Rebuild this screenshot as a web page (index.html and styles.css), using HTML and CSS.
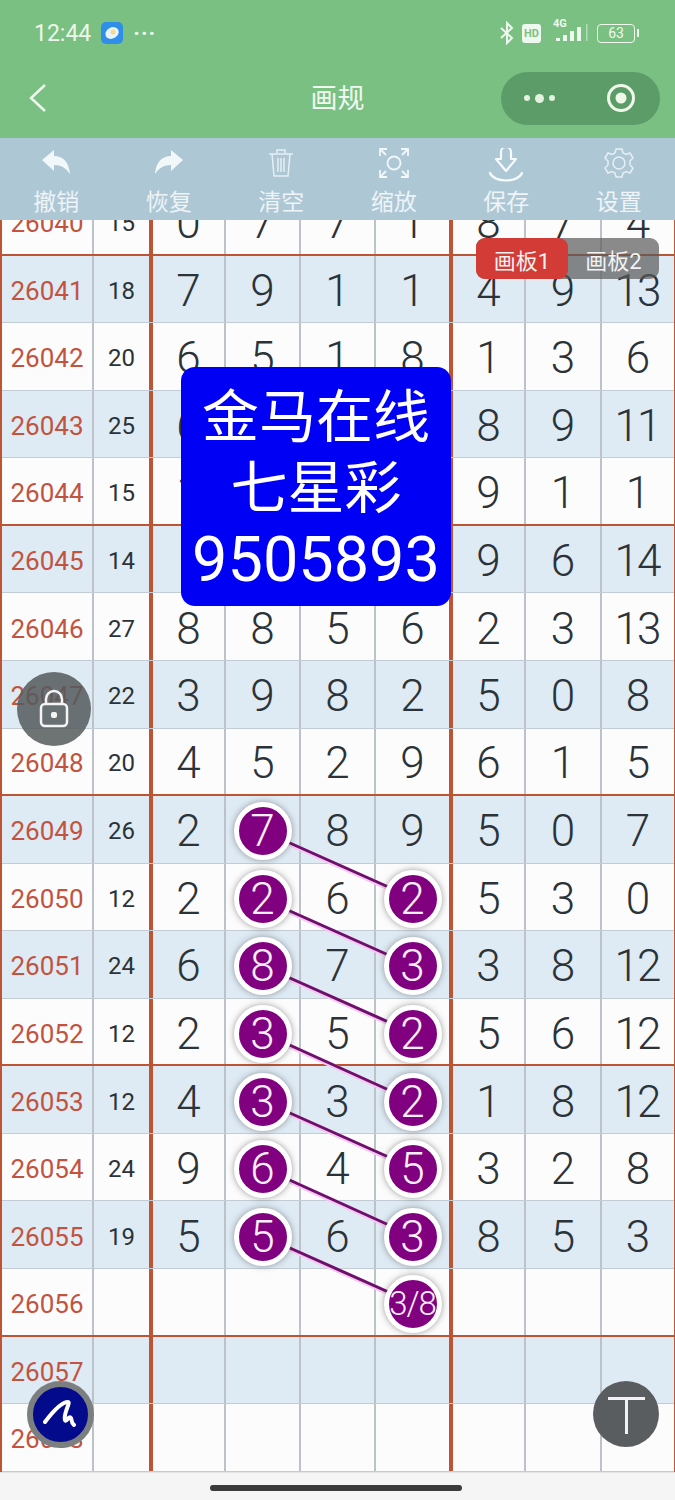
FILE: index.html
```html
<!DOCTYPE html>
<html lang="zh">
<head>
    <meta charset="UTF-8">
    <meta name="viewport" content="width=device-width, initial-scale=1.0">
    <title>画规</title>
    <link rel="stylesheet" href="styles.css">
</head>
<body>
    <header class="top">
        <div class="status">
            <span class="time">12:44</span>
            <svg class="app-icon" width="22" height="22" viewBox="0 0 22 22"><rect width="22" height="22" rx="5" fill="#2f8fe8"/><ellipse cx="11" cy="11" rx="7" ry="5.5" fill="#e8f4ff" transform="rotate(-30 11 11)"/><circle cx="12" cy="10" r="2.5" fill="#f4d98a"/></svg>
            <span class="status-dots">···</span>
            <span class="status-right">
                <svg width="18" height="24" viewBox="0 0 16 24" fill="none" stroke="#eef8ee" stroke-width="2"><path d="M2 7l11 10-5 5V2l5 5L2 17"/></svg>
                <span class="hd">HD</span>
                <span class="net"><b>4G</b><svg width="36" height="18" viewBox="0 0 36 18" fill="#eef8ee"><rect x="1" y="14" width="4" height="3"/><rect x="8" y="11" width="4" height="6"/><rect x="15" y="7" width="4" height="10"/><rect x="22" y="3" width="4" height="14"/><rect x="31" y="0" width="1.500" height="17" opacity=".5"/></svg></span>
                <span class="battery">63</span><span class="battery-tip"></span>
            </span>
        </div>
        <div class="nav">
            <svg class="back" width="20" height="30" viewBox="0 0 20 30" fill="none" stroke="#f0f8f0" stroke-width="2.500"><path d="M17 2L3 15l14 13"/></svg>
            <span class="nav-title">画规</span>
            <div class="capsule">
                <span class="capsule-dots"><i></i><i class="big"></i><i></i></span>
                <svg width="32" height="32" viewBox="0 0 32 32"><circle cx="16" cy="16" r="12.500" fill="none" stroke="#f0f8ea" stroke-width="3"/><circle cx="16" cy="16" r="5.500" fill="#f0f8ea"/></svg>
            </div>
        </div>
    </header>

    <div class="toolbar">
        <div class="tool">
            <svg width="30" height="28" viewBox="0 0 30 28" fill="#f2f7fa"><path d="M1 12L13 2v6c9 0 15 6 16 18-4-6-9-9-16-9v6z"/></svg>
            <span>撤销</span>
        </div>
        <div class="tool">
            <svg width="30" height="28" viewBox="0 0 30 28" fill="#f2f7fa"><path d="M29 12L17 2v6C8 8 2 14 1 26c4-6 9-9 16-9v6z"/></svg>
            <span>恢复</span>
        </div>
        <div class="tool">
            <svg width="26" height="30" viewBox="0 0 26 30" fill="none" stroke="#e6eff4" stroke-width="1.500"><path d="M1 6h24M9 5V2h8v3M4 6l2 22h14l2-22M10 10v14M13 10v14M16 10v14"/></svg>
            <span>清空</span>
        </div>
        <div class="tool">
            <svg width="30" height="30" viewBox="0 0 30 30" fill="none" stroke="#f2f7fa" stroke-width="1.800"><circle cx="15" cy="15" r="6.500"/><path d="M1 8V1h7M1 1l6 6M22 1h7v7M29 1l-6 6M1 22v7h7M1 29l6-6M29 22v7h-7M29 29l-6-6"/></svg>
            <span>缩放</span>
        </div>
        <div class="tool">
            <svg width="36" height="34" viewBox="0 0 36 34" fill="none" stroke="#f6fafc" stroke-width="2.200" stroke-linejoin="round" stroke-linecap="round"><path d="M13 11V4a5 5 0 0 1 10 0v7h5L18 23 8 11zM2 25c4 10 28 10 32 0"/></svg>
            <span>保存</span>
        </div>
        <div class="tool">
            <svg width="30" height="30" viewBox="0 0 30 30" fill="none" stroke="#e6eff4" stroke-width="1.500"><circle cx="15" cy="15" r="6"/><path d="M12 1h6l1 4 3 1.500 4-1.500 3 5-3 3v4l3 3-3 5-4-1.500-3 1.500-1 4h-6l-1-4-3-1.500-4 1.500-3-5 3-3v-4L1 10l3-5 4 1.500L11 5z"/></svg>
            <span>设置</span>
        </div>
    </div>

    <main class="board">
        <div class="grid">
            <div class="row line"><div class="issue">26040</div><div class="sum">15</div><div class="num">0</div><div class="num">7</div><div class="num">7</div><div class="num">1</div><div class="num">8</div><div class="num">7</div><div class="num">4</div></div>
            <div class="row alt"><div class="issue">26041</div><div class="sum">18</div><div class="num">7</div><div class="num">9</div><div class="num">1</div><div class="num">1</div><div class="num">4</div><div class="num">9</div><div class="num two">13</div></div>
            <div class="row"><div class="issue">26042</div><div class="sum">20</div><div class="num">6</div><div class="num">5</div><div class="num">1</div><div class="num">8</div><div class="num">1</div><div class="num">3</div><div class="num">6</div></div>
            <div class="row alt"><div class="issue">26043</div><div class="sum">25</div><div class="num">6</div><div class="num"></div><div class="num"></div><div class="num"></div><div class="num">8</div><div class="num">9</div><div class="num two">11</div></div>
            <div class="row line"><div class="issue">26044</div><div class="sum">15</div><div class="num">1</div><div class="num"></div><div class="num"></div><div class="num"></div><div class="num">9</div><div class="num">1</div><div class="num">1</div></div>
            <div class="row alt"><div class="issue">26045</div><div class="sum">14</div><div class="num"></div><div class="num"></div><div class="num"></div><div class="num"></div><div class="num">9</div><div class="num">6</div><div class="num two">14</div></div>
            <div class="row"><div class="issue">26046</div><div class="sum">27</div><div class="num">8</div><div class="num">8</div><div class="num">5</div><div class="num">6</div><div class="num">2</div><div class="num">3</div><div class="num two">13</div></div>
            <div class="row alt"><div class="issue">26047</div><div class="sum">22</div><div class="num">3</div><div class="num">9</div><div class="num">8</div><div class="num">2</div><div class="num">5</div><div class="num">0</div><div class="num">8</div></div>
            <div class="row line"><div class="issue">26048</div><div class="sum">20</div><div class="num">4</div><div class="num">5</div><div class="num">2</div><div class="num">9</div><div class="num">6</div><div class="num">1</div><div class="num">5</div></div>
            <div class="row alt"><div class="issue">26049</div><div class="sum">26</div><div class="num">2</div><div class="num"><span class="ball">7</span></div><div class="num">8</div><div class="num">9</div><div class="num">5</div><div class="num">0</div><div class="num">7</div></div>
            <div class="row"><div class="issue">26050</div><div class="sum">12</div><div class="num">2</div><div class="num"><span class="ball">2</span></div><div class="num">6</div><div class="num"><span class="ball">2</span></div><div class="num">5</div><div class="num">3</div><div class="num">0</div></div>
            <div class="row alt"><div class="issue">26051</div><div class="sum">24</div><div class="num">6</div><div class="num"><span class="ball">8</span></div><div class="num">7</div><div class="num"><span class="ball">3</span></div><div class="num">3</div><div class="num">8</div><div class="num two">12</div></div>
            <div class="row line"><div class="issue">26052</div><div class="sum">12</div><div class="num">2</div><div class="num"><span class="ball">3</span></div><div class="num">5</div><div class="num"><span class="ball">2</span></div><div class="num">5</div><div class="num">6</div><div class="num two">12</div></div>
            <div class="row alt"><div class="issue">26053</div><div class="sum">12</div><div class="num">4</div><div class="num"><span class="ball">3</span></div><div class="num">3</div><div class="num"><span class="ball">2</span></div><div class="num">1</div><div class="num">8</div><div class="num two">12</div></div>
            <div class="row"><div class="issue">26054</div><div class="sum">24</div><div class="num">9</div><div class="num"><span class="ball">6</span></div><div class="num">4</div><div class="num"><span class="ball">5</span></div><div class="num">3</div><div class="num">2</div><div class="num">8</div></div>
            <div class="row alt"><div class="issue">26055</div><div class="sum">19</div><div class="num">5</div><div class="num"><span class="ball">5</span></div><div class="num">6</div><div class="num"><span class="ball">3</span></div><div class="num">8</div><div class="num">5</div><div class="num">3</div></div>
            <div class="row line"><div class="issue">26056</div><div class="sum"></div><div class="num"></div><div class="num"></div><div class="num"></div><div class="num"><span class="ball small">3/8</span></div><div class="num"></div><div class="num"></div><div class="num"></div></div>
            <div class="row alt"><div class="issue">26057</div><div class="sum"></div><div class="num"></div><div class="num"></div><div class="num"></div><div class="num"></div><div class="num"></div><div class="num"></div><div class="num"></div></div>
            <div class="row"><div class="issue">26058</div><div class="sum"></div><div class="num"></div><div class="num"></div><div class="num"></div><div class="num"></div><div class="num"></div><div class="num"></div><div class="num"></div></div>
        </div>

        <svg class="links" width="675" height="1252" viewBox="0 220 675 1252" fill="none">
            <g stroke="#f3c9f0" stroke-width="5"><path d="M263 832l150 67M263 900l150 67M263 967l150 67M263 1034l150 68M263 1102l150 67M263 1169l150 68M263 1237l150 67"/></g>
            <g stroke="#6e0f6c" stroke-width="3"><path d="M263 831l150 67M263 899l150 67M263 966l150 67M263 1033l150 68M263 1101l150 67M263 1168l150 68M263 1236l150 67"/></g>
        </svg>

        <div class="tabs">
            <span class="tab on">画板1</span>
            <span class="tab">画板2</span>
        </div>

        <div class="banner">金马在线<br>七星彩<br><span class="banner-no">9505893</span></div>

        <div class="lock">
            <svg width="30" height="40" viewBox="0 0 30 40" fill="none" stroke="#f4f4f4" stroke-width="2.500"><path d="M7 15V10a8 8 0 0 1 16 0v5"/><rect x="2" y="15" width="26" height="22" rx="4"/><rect x="12" y="23" width="6" height="6" rx="2" fill="#f4f4f4" stroke="none"/></svg>
        </div>
        <div class="pen">
            <svg width="36" height="30" viewBox="0 0 36 30" fill="none" stroke="#fff" stroke-width="4" stroke-linecap="round" stroke-linejoin="round"><path d="M2 22C8 14 18 2 25 2c3 0-5 12-3 18 1 3 4-5 6-2 1 2 0 5 3 7"/></svg>
        </div>
        <div class="text-tool"><i class="t-bar"></i><i class="t-stem"></i></div>
    </main>

    <footer class="home"><span class="home-bar"></span></footer>
</body>
</html>
```

FILE: styles.css
```css
/* General Styles */
html, body {
    margin: 0;
    padding: 0;
}

body {
    width: 675px;
    height: 1500px;
    overflow: hidden;
    font-family: 'Roboto', 'Noto Sans CJK SC', sans-serif;
    background-color: #f5f5f5;
    color: #2b3338;
}

/* Status bar and nav */
.top {
    height: 138px;
    background-color: #7bc083;
    color: #f0f8f0;
}

.status {
    height: 62px;
    padding: 4px 36px 0 34px;
    box-sizing: border-box;
    display: flex;
    align-items: center;
    gap: 10px;
}

.time {
    font-size: 23px;
    color: #eef6ea;
}

.status-dots {
    font-size: 22px;
    font-weight: bold;
    letter-spacing: 1px;
}

.status-right {
    margin-left: auto;
    display: flex;
    align-items: center;
    gap: 6px;
}

.hd {
    background-color: #eef8ee;
    color: #7bc083;
    font-size: 11px;
    font-weight: bold;
    border-radius: 3px;
    padding: 3px 2px;
    margin-right: 4px;
}

.net {
    position: relative;
    display: flex;
    align-items: flex-end;
    padding-left: 4px;
}

.net b {
    position: absolute;
    left: 2px;
    top: -7px;
    font-size: 11px;
}

.battery {
    width: 36px;
    height: 17px;
    border: 1.500px solid #eef8ee;
    border-radius: 4px;
    font-size: 14px;
    line-height: 17px;
    text-align: center;
}

.battery-tip {
    width: 2px;
    height: 8px;
    margin-left: -4px;
    background-color: #eef8ee;
}

.nav {
    height: 72px;
    padding: 0 15px 0 28px;
    display: flex;
    align-items: center;
    justify-content: space-between;
    position: relative;
}

.nav-title {
    position: absolute;
    left: 0;
    right: 0;
    padding-bottom: 4px;
    text-align: center;
    font-size: 27px;
}

.capsule {
    width: 159px;
    height: 53px;
    box-sizing: border-box;
    padding: 0 23px;
    border-radius: 27px;
    background-color: #5c9c68;
    display: flex;
    align-items: center;
    justify-content: space-between;
}

.capsule-dots {
    display: flex;
    align-items: center;
    gap: 5px;
}

.capsule-dots i {
    width: 6px;
    height: 6px;
    border-radius: 50%;
    background-color: #e4f2e0;
}

.capsule-dots i.big {
    width: 9px;
    height: 9px;
}

/* Toolbar */
.toolbar {
    height: 82px;
    background-color: #adc7d5;
    display: flex;
}

.tool {
    flex: 1;
    height: 82px;
    padding: 10px 0 4px;
    box-sizing: border-box;
    display: flex;
    flex-direction: column;
    align-items: center;
    justify-content: space-between;
    color: #eef4f7;
    font-size: 23px;
}

.tool span {
    line-height: 26px;
}

/* Board */
.board {
    position: relative;
    height: 1252px;
    overflow: hidden;
}

.grid {
    margin-top: -32px;
    border-left: 2px solid #bd5433;
    border-right: 1px solid #bd5433;
    box-sizing: border-box;
    width: 675px;
}

.row {
    display: grid;
    grid-template-columns: 92px 59px 73px 75px 75px 77px 73px 76px 1fr;
    height: 67.57px;
    box-sizing: border-box;
    background-color: #fdfcfc;
    border-bottom: 1px solid #c3ccd4;
}

.row.alt {
    background-color: #deeaf4;
}

.row.line {
    border-bottom: 2.500px solid #bd5433;
}

.row > div {
    display: flex;
    align-items: center;
    justify-content: center;
    box-sizing: border-box;
    padding-top: 4px;
    border-right: 2px solid #bcc3c8;
}

.issue {
    color: #c2533f;
    font-size: 26px;
}

.sum {
    font-size: 24px;
    border-right: 4px solid #bd5433 !important;
}

.num {
    font-size: 44px;
    font-weight: 350;
}

.num.two {
    letter-spacing: -2px;
    padding-right: 2px;
}

.row > .num:nth-child(6) {
    border-right: 4px solid #bd5433;
}

.row > .num:last-child {
    border-right: none;
}

.ball {
    flex: none;
    width: 58px;
    height: 58px;
    box-sizing: border-box;
    border: 5px solid #fff;
    border-radius: 50%;
    background-color: #800080;
    color: #fbeffb;
    font-size: 44px;
    display: flex;
    align-items: center;
    justify-content: center;
    box-shadow: 0 0 6px rgba(60, 60, 60, 0.5);
    position: relative;
    z-index: 2;
}

.ball.small {
    font-size: 33px;
    letter-spacing: -1px;
    white-space: nowrap;
    overflow: hidden;
}

.links {
    position: absolute;
    left: 0;
    top: 0;
    z-index: 1;
}

.tabs {
    position: absolute;
    left: 476px;
    top: 18px;
    width: 183px;
    height: 41px;
    display: flex;
    border-radius: 9px;
    background-color: rgba(90, 90, 90, 0.7);
}

.tab {
    flex: 1;
    text-align: center;
    font-size: 22px;
    line-height: 47px;
    height: 41px;
    color: #f2f2f2;
    border-radius: 9px;
}

.tab.on {
    flex: none;
    width: 92px;
    background-color: #d33b37;
}

.banner {
    position: absolute;
    left: 181px;
    top: 147px;
    width: 270px;
    height: 239px;
    border-radius: 14px;
    background-color: #0000f5;
    color: #fff;
    text-align: center;
    font-size: 57px;
    line-height: 71px;
    padding-top: 15px;
    box-sizing: border-box;
    z-index: 3;
}

.banner-no {
    font-size: 63px;
}

.lock {
    position: absolute;
    left: 17px;
    top: 452px;
    width: 74px;
    height: 74px;
    border-radius: 50%;
    background-color: rgba(85, 90, 92, 0.85);
    display: flex;
    align-items: center;
    justify-content: center;
    z-index: 4;
}

.pen {
    position: absolute;
    left: 27px;
    top: 1161px;
    width: 55px;
    height: 55px;
    border: 6px solid #7c7f80;
    border-radius: 50%;
    background-color: #040a8c;
    display: flex;
    align-items: center;
    justify-content: center;
    z-index: 4;
}

.text-tool {
    position: absolute;
    left: 593px;
    top: 1161px;
    width: 66px;
    height: 66px;
    border-radius: 50%;
    background-color: #5a5d60;
    z-index: 4;
}

.t-bar {
    position: absolute;
    left: 15px;
    top: 16px;
    width: 37px;
    height: 3px;
    background-color: #f2f2f2;
}

.t-stem {
    position: absolute;
    left: 32px;
    top: 16px;
    width: 3px;
    height: 37px;
    background-color: #f2f2f2;
}

/* Bottom bar */
.home {
    height: 28px;
    border-top: 1px solid #e4e4e4;
    box-sizing: border-box;
    display: flex;
    align-items: center;
    justify-content: center;
}

.home-bar {
    width: 252px;
    height: 6px;
    border-radius: 3px;
    background-color: #3a3a3a;
    margin: 2px 3px 0 0;
}
```
